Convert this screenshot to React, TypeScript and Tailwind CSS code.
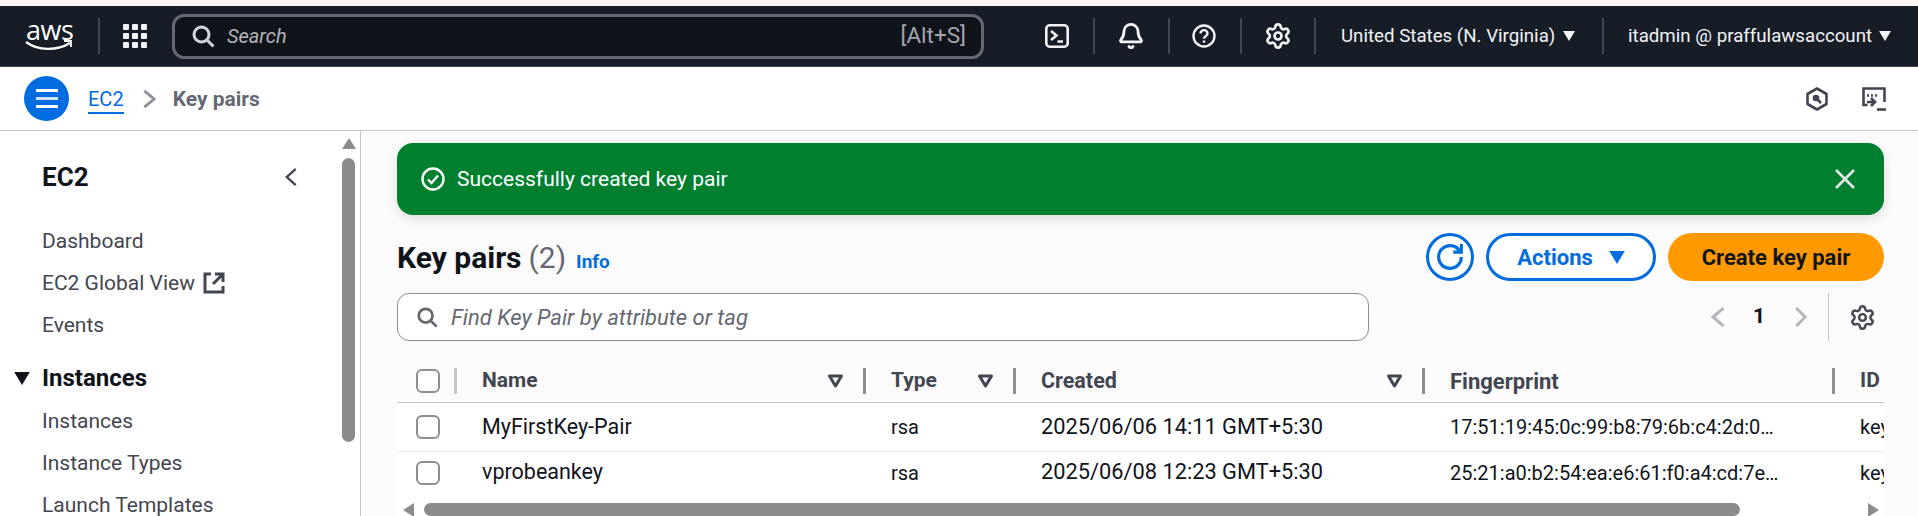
import React from "react";
import { Settings, Bell } from "lucide-react";

const font = { fontFamily: "Roboto, 'Noto Sans', sans-serif" };

function Divider() {
  return <div className="w-[2px] h-[36px] bg-[#414750] shrink-0" />;
}

function Caret({ className }: { className: string }) {
  return (
    <svg viewBox="0 0 12 10" className={className}>
      <path d="M0 0h12L6 10z" fill="currentColor" />
    </svg>
  );
}

function Chevron({ dir, className, width = 3 }: { dir: "left" | "right"; className: string; width?: number }) {
  return (
    <svg viewBox="0 0 14 20" preserveAspectRatio="none" className={className} fill="none" stroke="currentColor" strokeWidth={width}>
      <path d={dir === "left" ? "M12.5 1 2 10l10.5 9" : "M1.5 1 12 10 1.5 19"} />
    </svg>
  );
}

function SearchIcon({ className }: { className: string }) {
  return (
    <svg viewBox="0 0 16 16" fill="none" stroke="currentColor" strokeWidth="2" className={className}>
      <circle cx="7" cy="7" r="5" />
      <path d="m15 15-4.5-4.5" />
    </svg>
  );
}

function Check() {
  return <div className="w-[24px] h-[24px] rounded-[6px] border-2 border-[#8c8c94] bg-white" />;
}

function Filter() {
  return (
    <svg viewBox="0 0 17 15" className="w-[17px] h-[15px] text-[#424650]" fill="none" stroke="currentColor" strokeWidth="3">
      <path d="M2.5 2h12L8.5 12z" strokeLinejoin="round" />
    </svg>
  );
}

function Sep({ light }: { light?: boolean }) {
  return <div className={light ? "w-[3px] h-[26px] bg-[#c6c6cd]" : "w-[3px] h-[26px] bg-[#8c8c94]"} />;
}

function HeadCell({ label, filter, size }: { label: string; filter?: boolean; size: string }) {
  return (
    <div className="flex items-center pl-[25px] h-full">
      <span className={size}>{label}</span>
      <div className="ml-auto flex items-center">
        {filter && (
          <div className="mr-[19px]">
            <Filter />
          </div>
        )}
        <Sep />
      </div>
    </div>
  );
}

const rows = [
  ["MyFirstKey-Pair", "rsa", "2025/06/06 14:11 GMT+5:30", "17:51:19:45:0c:99:b8:79:6b:c4:2d:0…"],
  ["vprobeankey", "rsa", "2025/06/08 12:23 GMT+5:30", "25:21:a0:b2:54:ea:e6:61:f0:a4:cd:7e…"],
];

const nav = ["Dashboard", "EC2 Global View", "Events"];
const nav2 = ["Instances", "Instance Types", "Launch Templates"];

export default function App() {
  return (
    <div style={font} className="w-[1918px] h-[516px] overflow-hidden bg-white text-[21px] text-[#0f141a] flex flex-col">
      <div className="h-[6px] bg-[#fff5f1] shrink-0" />
      {/* Top nav */}
      <div className="h-[61px] shrink-0 bg-[#161d26] border-b border-[#414750] flex items-center text-white">
        <div className="w-[98px] shrink-0 pl-[25px] flex flex-col items-start">
          <span className="text-[27px] leading-[20px] ml-[1px] tracking-[-0.5px]" style={{ fontFamily: "'Open Sans', sans-serif" }}>aws</span>
          <svg viewBox="0 0 48 14" className="w-[48px] h-[14px] -mt-[1px]" fill="none" stroke="#fff" strokeWidth="2.2">
            <path d="M1 3c12 9 31 9 44 1" />
            <path d="M39 2h7v6" strokeWidth="1.8" />
          </svg>
        </div>
        <Divider />
        <div className="ml-[23px] grid grid-cols-3 gap-[3px] w-[24px] shrink-0">
          {Array.from({ length: 9 }).map((_, i) => (
            <div key={i} className="w-[6px] h-[6px] rounded-[1px] bg-[#f3f3f7]" />
          ))}
        </div>
        <div className="ml-[25px] w-[812px] shrink-0 h-[45px] rounded-[12px] border-[3px] border-[#656871] bg-[#0f141a] flex items-center pl-[16px] pr-[15px]">
          <SearchIcon className="w-[24px] h-[24px] text-[#d1d5db]" />
          <span className="ml-[12px] italic text-[20px] text-[#b4b4bb]">Search</span>
          <span className="ml-auto text-[22.5px] text-[#a4a4ad]">[Alt+S]</span>
        </div>
        <div className="ml-[61px] flex items-center shrink-0">
          <svg viewBox="0 0 24 24" className="w-[24px] h-[24px]" fill="none" stroke="#f3f3f7" strokeWidth="2.6">
            <rect x="1.3" y="1.3" width="21.4" height="21.4" rx="3.5" />
            <path d="M6 7l5.5 4.5L6 16M12.5 17.5h5.5" />
          </svg>
          <div className="ml-[24px]"><Divider /></div>
          <Bell className="ml-[22px] w-[28px] h-[28px] text-[#f3f3f7]" strokeWidth={2.4} />
          <div className="ml-[23px]"><Divider /></div>
          <svg viewBox="0 0 24 24" className="ml-[22px] w-[24px] h-[24px]" fill="none" stroke="#f3f3f7" strokeWidth="2.4">
            <circle cx="12" cy="12" r="10.5" />
            <path d="M8.5 9.5c0-2 1.6-3.4 3.5-3.4s3.5 1.4 3.5 3.3c0 2.7-3.5 2.7-3.5 5.3M12 16.5v2.2" />
          </svg>
          <div className="ml-[24px]"><Divider /></div>
          <Settings className="ml-[22px] w-[28px] h-[28px] text-[#f3f3f7]" strokeWidth={2.3} />
          <div className="ml-[22px]"><Divider /></div>
          <span className="ml-[25px] w-[213px] text-[18.7px] text-[#f3f3f7] whitespace-nowrap">United States (N. Virginia)</span>
          <Caret className="ml-[9px] w-[12px] h-[10px] text-[#f3f3f7]" />
          <div className="ml-[27px]"><Divider /></div>
          <span className="ml-[24px] w-[243px] text-[18.7px] text-[#f3f3f7] whitespace-nowrap">itadmin @ praffulawsaccount</span>
          <Caret className="ml-[8px] w-[12px] h-[10px] text-[#f3f3f7]" />
        </div>
      </div>
      {/* Breadcrumb */}
      <div className="h-[64px] shrink-0 border-b border-[#c6c6cd] flex items-center pl-[24px] pr-[32px]">
        <div className="w-[45px] h-[45px] rounded-full bg-[#006ce0] flex flex-col items-center justify-center gap-[5px]">
          <div className="w-[22px] h-[3px] bg-white" />
          <div className="w-[22px] h-[3px] bg-[#cfe3fb]" />
          <div className="w-[22px] h-[3px] bg-white" />
        </div>
        <a className="ml-[19px] text-[20px] text-[#006ce0] border-b-2 border-[#006ce0] leading-[26px] mt-[3px]">EC2</a>
        <Chevron dir="right" className="ml-[19px] w-[13px] h-[18px] text-[#8c8c94]" />
        <span className="ml-[17px] mt-[2px] font-bold text-[#656871]">Key pairs</span>
        <div className="ml-auto flex items-center gap-[34px]">
          <svg viewBox="0 0 22 24" className="w-[22px] h-[24px]" fill="none" stroke="#424650" strokeWidth="2.6">
            <path d="M11 1.5 20.5 7v10L11 22.5 1.5 17V7z" strokeLinejoin="round" />
            <circle cx="10" cy="11" r="2" fill="#424650" />
            <path d="M11 12l4 4" />
          </svg>
          <svg viewBox="0 0 24 24" className="w-[24px] h-[24px]" fill="none" stroke="#424650" strokeWidth="2.6">
            <path d="M5.5 18H1.5V1.5h21V15" />
            <path d="M5 8.5h2M9 8.5h2M13 8.5h2" strokeWidth="2.5" />
            <path d="M5 15h7M9 11l4 4-4 4" />
            <path d="M15 22.5h9" />
          </svg>
        </div>
      </div>
      {/* Body */}
      <div className="flex-1 flex min-h-0">
        {/* Sidebar */}
        <div className="w-[361px] shrink-0 border-r border-[#c6c6cd] flex">
          <div className="flex-1 min-w-0">
            <div className="flex items-center pl-[42px] pr-[45px] h-[40px] mt-[26px]">
              <span className="font-bold text-[26px]">EC2</span>
              <Chevron dir="left" width={2.6} className="ml-auto w-[12px] h-[18px] text-[#424650]" />
            </div>
            <div className="mt-[30px] pl-[42px] text-[#424650] flex flex-col gap-[14px]">
              {nav.map((n) => (
                <div key={n} className="h-[28px] flex items-center leading-[28px]">
                  {n}
                  {n === "EC2 Global View" && (
                    <svg viewBox="0 0 22 22" className="ml-[8px] w-[22px] h-[22px]" fill="none" stroke="#424650" strokeWidth="3">
                      <path d="M8 2H2v18h18v-6M12 2h8v8M20 2 10 12" />
                    </svg>
                  )}
                </div>
              ))}
            </div>
            <div className="mt-[24px] pl-[14px] flex items-center h-[30px]">
              <Caret className="w-[16px] h-[13px] text-[#0f141a]" />
              <span className="ml-[12px] font-bold text-[24px]">Instances</span>
            </div>
            <div className="mt-[14px] pl-[42px] text-[#424650] flex flex-col gap-[14px]">
              {nav2.map((n) => (
                <div key={n} className="h-[28px] leading-[28px]">{n}</div>
              ))}
            </div>
          </div>
          <div className="w-[13px] mr-[5px] shrink-0 flex flex-col items-center">
            <svg viewBox="0 0 14 11" className="w-[14px] h-[11px] mt-[7px]"><path d="M7 0l7 11H0z" fill="#8c8c8c" /></svg>
            <div className="w-[13px] h-[284px] mt-[9px] rounded-[7px] bg-[#8c8c8c]" />
          </div>
        </div>
        {/* Main */}
        <div className="flex-1 min-w-0 bg-[#fbfbfb] pl-[36px] pr-[34px] pt-[12px] flex flex-col">
          <div className="h-[72px] shrink-0 rounded-[16px] bg-[#00802f] shadow-[0_4px_12px_rgba(0,0,0,0.12)] flex items-center pl-[24px] pr-[29px] text-white">
            <svg viewBox="0 0 24 24" className="w-[24px] h-[24px]" fill="none" stroke="#fff" strokeWidth="2.4">
              <circle cx="12" cy="12" r="10.5" />
              <path d="M7 12.5l3.5 3.5L17 8.5" />
            </svg>
            <span className="ml-[12px] mt-[2px]">Successfully created key pair</span>
            <svg viewBox="0 0 20 20" className="ml-auto w-[20px] h-[20px]" fill="none" stroke="#e4e6e8" strokeWidth="2.6">
              <path d="M1 1l18 18M19 1 1 19" />
            </svg>
          </div>
          <div className="mt-[18px] h-[48px] shrink-0 flex items-center">
            <div className="flex items-baseline">
              <span className="font-bold text-[30px]">Key pairs</span>
              <span className="ml-[7px] text-[30px] text-[#656871]">(2)</span>
              <span className="ml-[10px] text-[19px] font-bold text-[#006ce0]">Info</span>
            </div>
            <div className="ml-auto flex items-center gap-[12px]">
              <div className="w-[48px] h-[48px] rounded-full border-[3px] border-[#006ce0] bg-white flex items-center justify-center">
                <svg viewBox="0 0 16 16" className="w-[26px] h-[26px]" fill="none" stroke="#006ce0" strokeWidth="1.9">
                  <path d="M10 5h5V0" />
                  <path d="M15 8c0 3.87-3.13 7-7 7s-7-3.13-7-7 3.13-7 7-7c2.79 0 5.2 1.63 6.33 4" />
                </svg>
              </div>
              <div className="w-[170px] h-[48px] rounded-full border-[3px] border-[#006ce0] bg-white flex items-center justify-center font-bold text-[22px] text-[#006ce0]">
                Actions
                <Caret className="ml-[16px] w-[16px] h-[13px]" />
              </div>
              <div className="w-[216px] h-[48px] rounded-full bg-[#ff9900] flex items-center justify-center font-bold text-[22px] text-[#0f141a]">
                Create key pair
              </div>
            </div>
          </div>
          <div className="mt-[12px] h-[48px] shrink-0 flex items-center">
            <div className="w-[972px] h-[48px] rounded-[12px] border border-[#8c8c94] bg-white flex items-center pl-[18px]">
              <SearchIcon className="w-[22px] h-[22px] text-[#656871]" />
              <span className="ml-[13px] italic text-[22px] text-[#656871]">Find Key Pair by attribute or tag</span>
            </div>
            <div className="ml-auto flex items-center h-[48px]">
              <Chevron dir="left" className="w-[14px] h-[20px] text-[#b4b4bb]" />
              <span className="ml-[28px] mr-[30px] font-bold">1</span>
              <Chevron dir="right" className="w-[12px] h-[20px] text-[#b4b4bb]" />
              <div className="ml-[21px] w-px h-[48px] bg-[#c6c6cd]" />
              <Settings className="ml-[20px] w-[27px] h-[27px] text-[#424650]" strokeWidth={2.2} />
              <div className="w-[8px]" />
            </div>
          </div>
          {/* Table */}
          <div className="mt-[16px] overflow-hidden">
            <div className="grid grid-cols-[60px_409px_150px_409px_410px_100px] w-[1638px] h-[46px] pt-[3px] items-center border-b border-[#c6c6cd]">
              <div className="flex items-center pl-[19px] h-full">
                <Check />
                <div className="ml-auto"><Sep light /></div>
              </div>
              <HeadCell label="Name" filter size="font-bold text-[#424650] text-[21px]" />
              <HeadCell label="Type" filter size="font-bold text-[#424650] text-[21px]" />
              <HeadCell label="Created" filter size="font-bold text-[#424650] text-[21.5px]" />
              <HeadCell label="Fingerprint" size="font-bold text-[#424650] text-[22px]" />
              <div className="pl-[25px] font-bold text-[#424650]">ID</div>
            </div>
            {rows.map((r, i) => (
              <div key={r[0]} className={i === 0 ? "grid grid-cols-[60px_409px_150px_409px_410px_100px] w-[1638px] h-[49px] items-center border-b border-[#e9ebed] bg-white" : "grid grid-cols-[60px_409px_150px_409px_410px_100px] w-[1638px] h-[41px] items-center bg-white"}>
                <div className="pl-[19px]"><Check /></div>
                <div className="pl-[25px] text-[21.5px]">{r[0]}</div>
                <div className="pl-[25px] text-[20px]">{r[1]}</div>
                <div className="pl-[25px] text-[21.8px]">{r[2]}</div>
                <div className="pl-[25px] text-[20px] whitespace-nowrap">{r[3]}</div>
                <div className="pl-[25px] text-[20px] whitespace-nowrap">key</div>
              </div>
            ))}
          </div>
          <div className="flex-1 bg-white" />
          <div className="h-[13px] shrink-0 flex items-center bg-white">
            <svg viewBox="0 0 11 14" className="ml-[6px] w-[11px] h-[14px]"><path d="M0 7l11-7v14z" fill="#8c8c8c" /></svg>
            <div className="ml-[10px] w-[1316px] h-[13px] rounded-[7px] bg-[#8c8c8c]" />
            <svg viewBox="0 0 11 14" className="ml-[128px] w-[11px] h-[14px]"><path d="M11 7 0 0v14z" fill="#8c8c8c" /></svg>
          </div>
        </div>
      </div>
    </div>
  );
}
